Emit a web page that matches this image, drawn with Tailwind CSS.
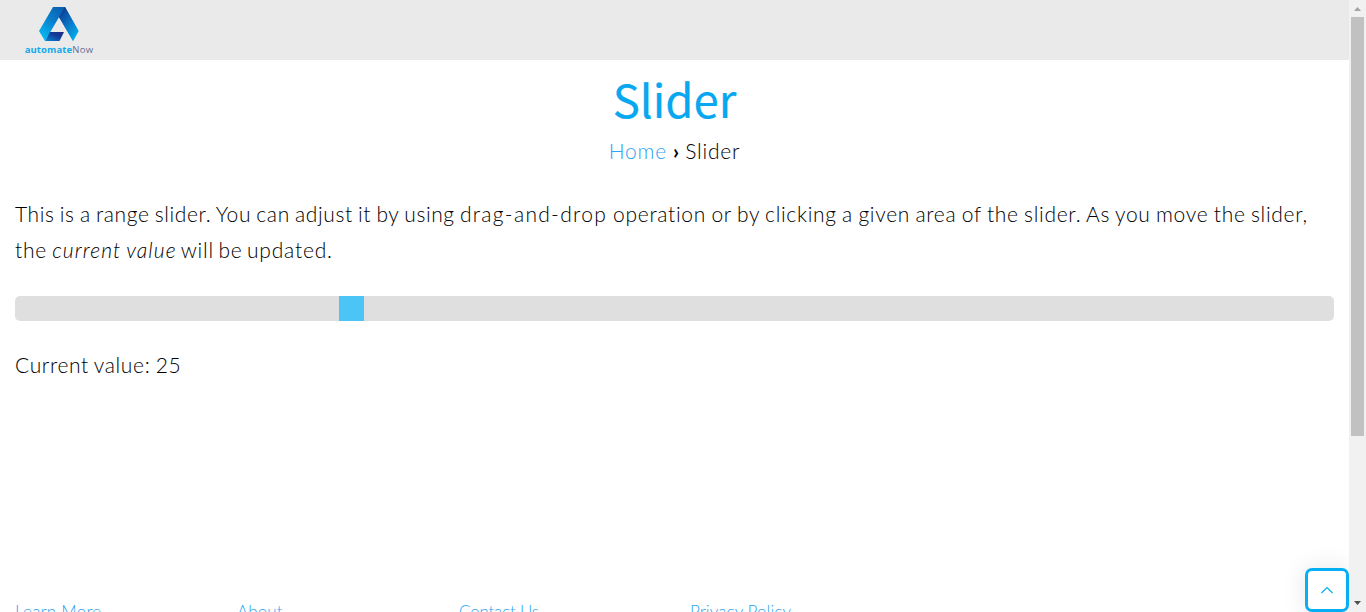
<!DOCTYPE html>
<html lang="en">
<head>
<meta charset="utf-8">
<title>Slider</title>
<script src="https://cdn.jsdelivr.net/npm/@tailwindcss/browser@4"></script>
</head>
<body class="h-[612px] overflow-hidden bg-white font-['Lato','Liberation_Sans',sans-serif] text-[21px] font-light text-black">
<div class="flex h-[612px] overflow-hidden">
  <div class="relative flex h-[612px] w-[1349px] flex-col overflow-hidden">
    <header class="h-[60px] shrink-0 bg-[#eaeaea] pl-[24px] pt-[7px]">
      <a class="flex w-[70px] flex-col items-center">
        <svg class="block h-[34px] w-[40px]" viewBox="0 0 40 34">
          <defs>
            <linearGradient id="left" x1="0.8" y1="0" x2="0.1" y2="1"><stop offset="0" stop-color="#0a5fb0"/><stop offset="0.45" stop-color="#0882d0"/><stop offset="1" stop-color="#06c4f8"/></linearGradient>
            <linearGradient id="right" x1="0.2" y1="0" x2="0.9" y2="1"><stop offset="0" stop-color="#0c3990"/><stop offset="0.4" stop-color="#0a6cbe"/><stop offset="1" stop-color="#02b8f6"/></linearGradient>
            <linearGradient id="foot" x1="0" y1="1" x2="1" y2="0"><stop offset="0" stop-color="#0789d8"/><stop offset="0.6" stop-color="#133a98"/><stop offset="1" stop-color="#1b2a83"/></linearGradient>
          </defs>
          <path d="M20 0H26L39.500 24L34 34L20 10Z" fill="url(#right)"/>
          <path d="M14 0H26L6 34L0 24Z" fill="url(#left)"/>
          <path d="M26 0L39.500 24L34 34L20 10Z" fill="url(#right)"/>
          <path d="M11 25H25L20.500 34H6Z" fill="url(#foot)"/>
        </svg>
        <span class="mt-[3px] whitespace-nowrap font-['Open_Sans'] text-[9.5px] leading-[11px] text-[#6a6a90]"><b class="font-bold tracking-[0.1px] text-[#10a8ec]">automate</b><span class="font-normal tracking-[0.3px]">Now</span></span>
      </a>
    </header>
    <main class="flex flex-col px-[15px]">
      <h1 class="mt-[8px] text-center font-['Noto_Sans_CJK_JP'] text-[45.5px] font-normal leading-[60px] text-[#08a8f0] [-webkit-text-stroke:0.2px_#08a8f0]">Slider</h1>
      <nav class="mt-[5px] text-center leading-[36px] tracking-[0.8px]"><a class="text-[#2ea3f2]">Home</a><b class="mx-[6px] font-bold tracking-normal">›</b>Slider</nav>
      <p class="mt-[27px] whitespace-nowrap leading-[36px] [word-spacing:-1px]"><span class="tracking-[0.7px]"><span class="tracking-[0.6px]">This is a range slider. You can adjust it by using </span><span class="tracking-[1.3px]">drag-and-drop </span>operation or by clicking a given area of the slider. As you move the slider,</span><br><span class="tracking-[0.7px]">the <em class="tracking-[1.1px]">current value</em><span class="tracking-[0.8px] [word-spacing:-2px]"> will be updated.</span></span></p>
      <div class="mt-[28px] h-[25px] w-[1319px] rounded-[5px] bg-[#dfdfdf] pl-[324px]"><div class="size-[25px] bg-[#4cc4f5]"></div></div>
      <p class="mt-[26px] leading-[36px] tracking-[0.65px] [word-spacing:-1px]">Current value: 25</p>
    </main>
    <footer class="mt-[217px] flex whitespace-nowrap text-[17px] leading-[24px] tracking-[0.1px] text-[#2ea3f2]">
      <a class="ml-[15px] w-[222px] tracking-[0.25px]">Learn More</a><a class="w-[222px]">About</a><a class="w-[231px] tracking-[-0.2px]">Contact Us</a><a>Privacy Policy</a>
    </footer>
    <a class="absolute left-[1305px] top-[568px] flex size-[44px] items-center justify-center rounded-[7px] border-3 border-[#06aef4] bg-white shadow-[0_0_25px_rgba(0,0,0,0.1)]">
      <svg class="h-[8px] w-[12px]" viewBox="0 0 12 8" fill="none" stroke="#06aef4" stroke-width="1.200"><path d="M.5 7L6 1.500L11.500 7"/></svg>
    </a>
  </div>
  <div class="flex w-[17px] flex-col items-center bg-[#f1f1f1]">
    <svg class="h-[17px] w-[17px] shrink-0" viewBox="0 0 17 17"><path d="M5 11L8.500 7L12 11Z" fill="#a3a3a3"/></svg>
    <div class="h-[419px] w-[13px] bg-[#c1c1c1]"></div>
    <svg class="mt-auto h-[17px] w-[17px] shrink-0" viewBox="0 0 17 17"><path d="M5 6L8.500 10L12 6Z" fill="#505050"/></svg>
  </div>
</div>
</body>
</html>
